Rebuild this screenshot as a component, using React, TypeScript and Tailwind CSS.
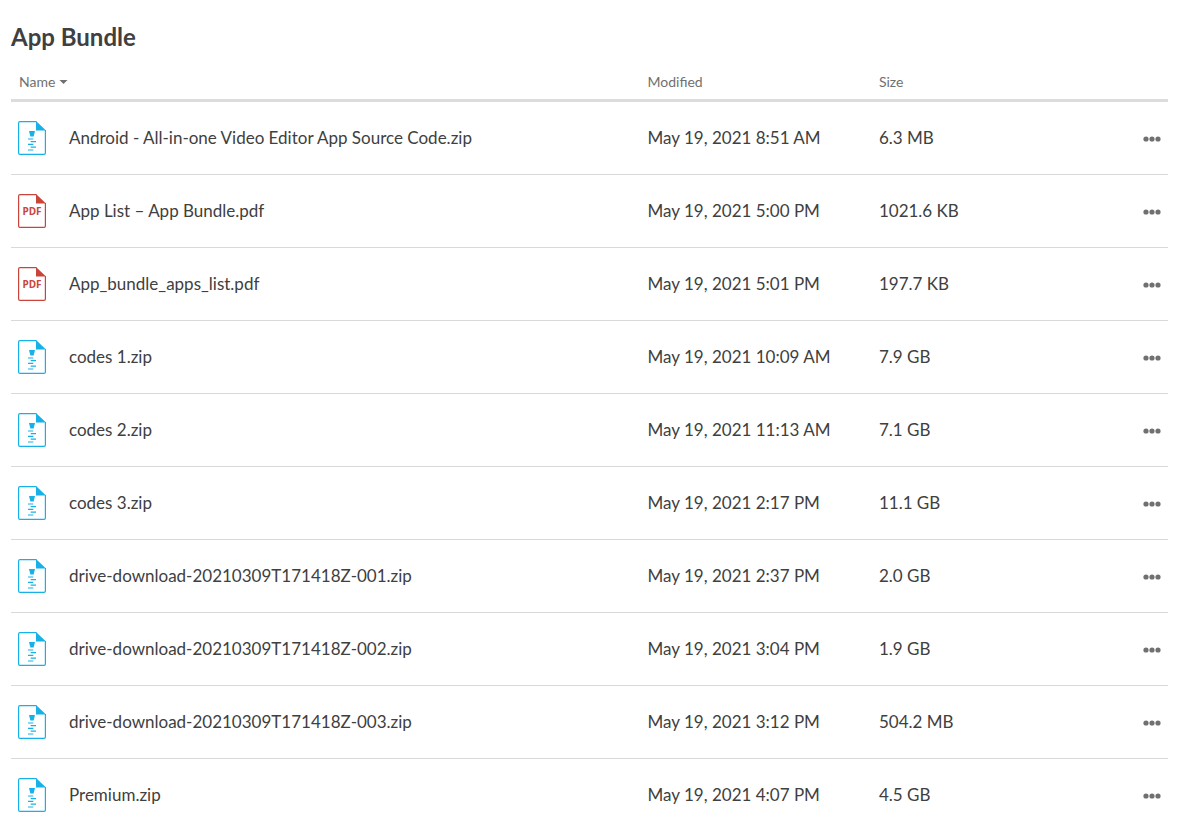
import React from 'react';

type FileKind = 'zip' | 'pdf';

interface FileEntry {
  name: string;
  kind: FileKind;
  modified: string;
  size: string;
}

const files: FileEntry[] = [
  { name: 'Android - All-in-one Video Editor App Source Code.zip', kind: 'zip', modified: 'May 19, 2021 8:51 AM', size: '6.3 MB' },
  { name: 'App List – App Bundle.pdf', kind: 'pdf', modified: 'May 19, 2021 5:00 PM', size: '1021.6 KB' },
  { name: 'App_bundle_apps_list.pdf', kind: 'pdf', modified: 'May 19, 2021 5:01 PM', size: '197.7 KB' },
  { name: 'codes 1.zip', kind: 'zip', modified: 'May 19, 2021 10:09 AM', size: '7.9 GB' },
  { name: 'codes 2.zip', kind: 'zip', modified: 'May 19, 2021 11:13 AM', size: '7.1 GB' },
  { name: 'codes 3.zip', kind: 'zip', modified: 'May 19, 2021 2:17 PM', size: '11.1 GB' },
  { name: 'drive-download-20210309T171418Z-001.zip', kind: 'zip', modified: 'May 19, 2021 2:37 PM', size: '2.0 GB' },
  { name: 'drive-download-20210309T171418Z-002.zip', kind: 'zip', modified: 'May 19, 2021 3:04 PM', size: '1.9 GB' },
  { name: 'drive-download-20210309T171418Z-003.zip', kind: 'zip', modified: 'May 19, 2021 3:12 PM', size: '504.2 MB' },
  { name: 'Premium.zip', kind: 'zip', modified: 'May 19, 2021 4:07 PM', size: '4.5 GB' },
];

const headCell = 'h-[39px] border-b-3 border-[#dcdcdc] pt-0.5 font-normal';
const bodyCell = 'h-[73px] border-b border-[#d9d9d9] whitespace-nowrap';

const FileIcon: React.FC<{ kind: FileKind }> = ({ kind }) => {
  const color = kind === 'zip' ? '#17b1e7' : '#c9453a';

  return (
    <span className="relative block h-[34px] w-7">
      <svg width="28" height="34" viewBox="0 0 28 34" fill="none" aria-hidden="true">
        <path d="M18.5 .6H2Q.6 .6 .6 2V32Q.6 33.4 2 33.4H26Q27.4 33.4 27.4 32V9" stroke={color} strokeWidth="1.2" />
        <path d="M18 0L28 9.5H18Z" fill={color} />
        {kind === 'zip' && (
          <>
            <path d="M11 10H17L15.6 15.4H12.4Z" fill={color} />
            <path d="M10 18H15.3M12.7 20.7H18M10 23.4H15.3M12.7 26.2H18M10 29H15.3" stroke={color} strokeWidth="1.2" />
          </>
        )}
      </svg>
      {kind === 'pdf' && (
        <span className="absolute inset-x-0 top-[11px] text-center font-['Open_Sans',sans-serif] text-[10px] leading-3 font-bold text-[#c9453a]">
          PDF
        </span>
      )}
    </span>
  );
};

const MoreButton: React.FC<{ name: string }> = ({ name }) => (
  <button type="button" aria-label={`More actions for ${name}`} className="block cursor-pointer">
    <svg width="18" height="6" viewBox="0 0 18 6" fill="#707070" aria-hidden="true">
      <circle cx="3" cy="3" r="2.6" />
      <circle cx="9" cy="3" r="2.6" />
      <circle cx="15" cy="3" r="2.6" />
    </svg>
  </button>
);

function App() {
  return (
    <div className="min-h-screen bg-white pt-[19px] pr-[13px] pl-[11px] font-[Lato,sans-serif] text-[#404040]">
      <h1 className="text-2xl leading-9 font-bold">App Bundle</h1>
      <table className="mt-2 w-full table-fixed border-separate border-spacing-0 text-left">
        <thead>
          <tr className="text-sm text-[#707070]">
            <th className={`${headCell} w-1/2 pl-2`}>
              <button type="button" className="flex items-center gap-1">
                Name
                <svg width="9" height="4" viewBox="0 0 9 4" fill="currentColor" aria-hidden="true">
                  <path d="M.5 0H8.5L4.5 4Z" />
                </svg>
              </button>
            </th>
            <th className={`${headCell} w-1/5 pl-[58px]`}>Modified</th>
            <th className={`${headCell} w-1/5 pl-[58px]`}>Size</th>
            <th className={`${headCell} w-1/10`} aria-label="Actions" />
          </tr>
        </thead>
        <tbody className="text-[17px] leading-6">
          {files.map((file) => (
            <tr key={file.name}>
              <td className={`${bodyCell} pl-[7px]`}>
                <div className="flex items-center gap-[23px]">
                  <FileIcon kind={file.kind} />
                  <span>{file.name}</span>
                </div>
              </td>
              <td className={`${bodyCell} pl-[58px]`}>{file.modified}</td>
              <td className={`${bodyCell} pl-[58px]`}>{file.size}</td>
              <td className={`${bodyCell} pt-0.5 pr-[7px]`}>
                <div className="flex justify-end">
                  <MoreButton name={file.name} />
                </div>
              </td>
            </tr>
          ))}
        </tbody>
      </table>
    </div>
  );
}

export default App;
